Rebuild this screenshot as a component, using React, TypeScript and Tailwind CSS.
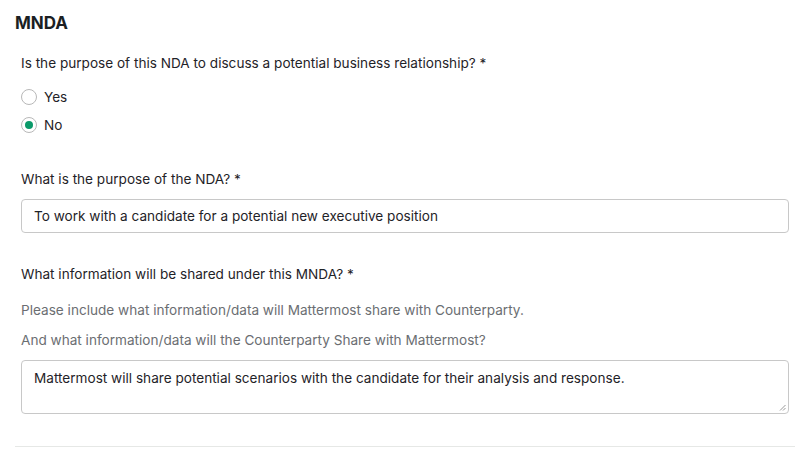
import React from "react";

export default function App() {
  return (
    <div className="w-[804px] h-[451px] bg-white overflow-hidden" style={{ fontFamily: "Inter, 'Noto Sans', sans-serif" }}>
      <div className="pl-[15px] pr-[9px] pt-[12px]">
        <h1 className="text-[17px] leading-[22px] font-bold text-[#1b1f23]">MNDA</h1>
        <div className="pl-[6px] pr-[6px]">
          <p className="mt-[19px] text-[13.6px] leading-[20px] text-[#1f2328]">Is the purpose of this NDA to discuss a potential business relationship? *</p>
          <div className="mt-[14px] flex flex-col gap-[8px]">
            <label className="flex items-center gap-[7px] h-[20px] text-[13.6px] text-[#1f2328]">
              <span className="w-[16px] h-[16px] rounded-full border border-[#b8b8b8] bg-white" />
              Yes
            </label>
            <label className="flex items-center gap-[7px] h-[20px] text-[13.6px] text-[#1f2328]">
              <span className="w-[16px] h-[16px] rounded-full border border-[#b8b8b8] bg-white flex items-center justify-center">
                <span className="w-[8px] h-[8px] rounded-full bg-[#0b9a6a]" />
              </span>
              No
            </label>
          </div>
          <p className="mt-[34px] text-[13.6px] leading-[20px] text-[#1f2328]">What is the purpose of the NDA? *</p>
          <div className="mt-[10px] h-[34px] border border-[#c8c8c8] rounded-[4px] px-[12px] flex items-center text-[13.6px] text-[#1f2328]">
            To work with a candidate for a potential new executive position
          </div>
          <p className="mt-[31px] text-[13.6px] leading-[20px] text-[#1f2328]">What information will be shared under this MNDA? *</p>
          <p className="mt-[16px] text-[13.6px] leading-[20px] text-[#6b6e72]">Please include what information/data will Mattermost share with Counterparty.</p>
          <p className="mt-[10px] text-[13.6px] leading-[20px] text-[#6b6e72]">And what information/data will the Counterparty Share with Mattermost?</p>
          <div className="relative mt-[10px] h-[54px] border border-[#c8c8c8] rounded-[4px] px-[12px] pt-[7px] text-[13.6px] leading-[20px] text-[#1f2328]">
            Mattermost will share potential scenarios with the candidate for their analysis and response.
            <svg className="absolute right-[2px] bottom-[2px]" width="7" height="7" viewBox="0 0 7 7">
              <path d="M6.5 1 L1 6.5 M6.5 4 L4 6.5" stroke="#999" strokeWidth="1" />
            </svg>
          </div>
        </div>
        <div className="mt-[32px] h-px bg-[#e6e8e6]" />
      </div>
    </div>
  );
}
